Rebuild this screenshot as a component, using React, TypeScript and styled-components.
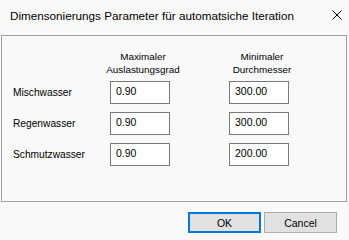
import styled, { createGlobalStyle } from "styled-components";

const GlobalStyle = createGlobalStyle`
  html, body {
    margin: 0;
    padding: 0;
    background: #f9f9f9;
  }
`;

type Row = { label: string; load: string; diameter: string };

const rows: Row[] = [
  { label: "Mischwasser", load: "0.90", diameter: "300.00" },
  { label: "Regenwasser", load: "0.90", diameter: "300.00" },
  { label: "Schmutzwasser", load: "0.90", diameter: "200.00" },
];

export default function App() {
  return (
    <>
      <GlobalStyle />
      <Window>
        <TitleBar>
          <Title>Dimensonierungs Parameter für automatsiche Iteration</Title>
          <CloseButton aria-label="Schließen">
            <svg width="10" height="10" viewBox="0 0 10 10">
              <path d="M0.5 0.5 L9.5 9.5 M9.5 0.5 L0.5 9.5" stroke="#000" strokeWidth="1" fill="none" />
            </svg>
          </CloseButton>
        </TitleBar>

        <Body>
          <GroupBox>
            <ParamGrid>
              <ColumnHeader $col={2}>
                Maximaler
                <br />
                Auslastungsgrad
              </ColumnHeader>
              <ColumnHeader $col={4}>
                Minimaler
                <br />
                Durchmesser
              </ColumnHeader>

              {rows.map((r, i) => (
                <ParamRow key={r.label}>
                  <RowLabel $row={i + 2}>{r.label}</RowLabel>
                  <ValueInput $row={i + 2} $col={2} defaultValue={r.load} />
                  <ValueInput $row={i + 2} $col={4} defaultValue={r.diameter} />
                </ParamRow>
              ))}
            </ParamGrid>
          </GroupBox>

          <ButtonRow>
            <DialogButton $primary>OK</DialogButton>
            <DialogButton>Cancel</DialogButton>
          </ButtonRow>
        </Body>
      </Window>
    </>
  );
}

const Window = styled.div`
  width: 349px;
  height: 240px;
  display: flex;
  flex-direction: column;
  background: #f9f9f9;
  font-family: "Liberation Sans", Arial, sans-serif;
  color: #000;
  overflow: hidden;
`;

const TitleBar = styled.div`
  height: 30px;
  display: flex;
  align-items: center;
  justify-content: space-between;
  padding: 0 7px 0 10px;
  box-sizing: border-box;
`;

const Title = styled.div`
  font-size: 11.7px;
  white-space: nowrap;
`;

const CloseButton = styled.div`
  width: 10px;
  height: 10px;
  display: flex;
`;

const Body = styled.div`
  display: flex;
  flex-direction: column;
  padding: 5px 2px 0 1px;
`;

const GroupBox = styled.div`
  height: 167px;
  border: 1px solid #a0a0a0;
  box-sizing: border-box;
`;

const ParamGrid = styled.div`
  display: grid;
  grid-template-columns: 97px 60px 59px 60px;
  grid-auto-rows: 31px;
  align-items: start;
  padding: 14px 0 0 11px;
  font-size: 10.2px;
`;

const ParamRow = styled.div`
  display: contents;
`;

const ColumnHeader = styled.div<{ $col: number }>`
  grid-row: 1;
  grid-column: ${(p) => p.$col};
  justify-self: center;
  margin-left: 6px;
  line-height: 13px;
  text-align: center;
  white-space: nowrap;
  font-size: 9.9px;
`;

const RowLabel = styled.div<{ $row: number }>`
  grid-row: ${(p) => p.$row};
  grid-column: 1;
  line-height: 24px;
`;

const ValueInput = styled.input<{ $row: number; $col: number }>`
  grid-row: ${(p) => p.$row};
  grid-column: ${(p) => p.$col};
  width: 60px;
  height: 23px;
  box-sizing: border-box;
  border: 1px solid #7a7a7a;
  background: #ffffff;
  padding: 0 0 3px 5px;
  margin: 0;
  font-family: "Liberation Sans", Arial, sans-serif;
  font-size: 10.5px;
  color: #000;
  outline: none;
`;

const ButtonRow = styled.div`
  display: flex;
  justify-content: flex-end;
  gap: 3px;
  padding: 10px 10px 0 0;
`;

const DialogButton = styled.button<{ $primary?: boolean }>`
  width: 73px;
  height: 21px;
  box-sizing: border-box;
  margin: 0;
  padding: 0;
  background: #e1e1e1;
  border: ${(p) => (p.$primary ? "2px solid #0078d7" : "1px solid #adadad")};
  font-family: "Liberation Sans", Arial, sans-serif;
  font-size: 10.5px;
  color: #000;
`;
